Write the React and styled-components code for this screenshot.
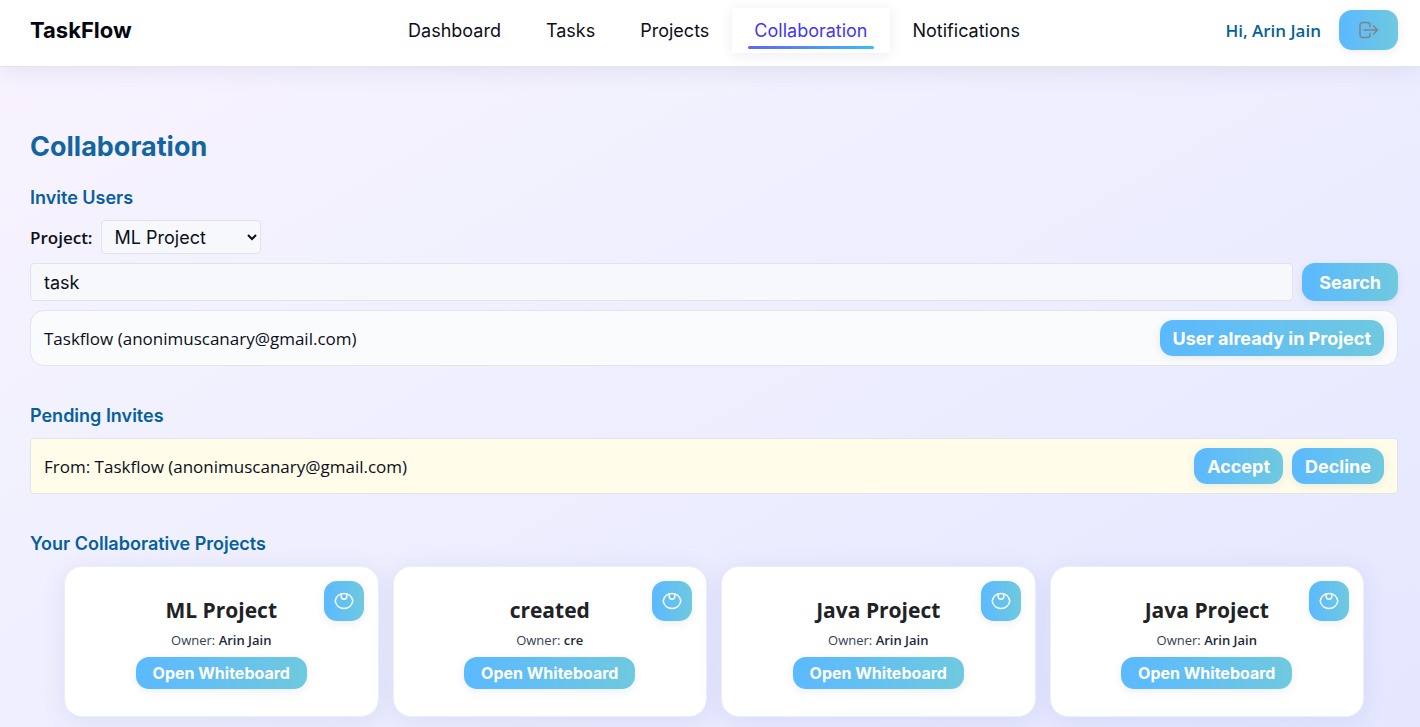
import React, { useState } from "react";
import styled, { createGlobalStyle, css } from "styled-components";

const inter = `Inter, "Liberation Sans", sans-serif`;
const body = `"Open Sans", "Noto Sans", sans-serif`;

const GlobalStyle = createGlobalStyle`
  *, *::before, *::after { box-sizing: border-box; }
  html { min-height: 100%; background: #e4e8ff; overflow-x: hidden; }
  body {
    margin: 0;
    background: linear-gradient(150deg, #f9f3ff 0%, #f2f1fe 30%, #e4e7ff 100%);
    font-family: ${body};
    font-size: 17px;
    color: #0b0f19;
  }
  h1, h2, h3, p, ul { margin: 0; padding: 0; }
  ul { list-style: none; }
`;

const Header = styled.header`
  display: grid;
  grid-template-columns: 1fr auto 1fr;
  align-items: start;
  height: 67px;
  padding: 8px 22px 0 30px;
  background: #fff;
  border-bottom: 1px solid #e2e4ee;
  box-shadow: 0 4px 24px rgba(60, 60, 120, 0.09);
`;

const Brand = styled.a`
  font: 700 22px/44px ${inter};
  color: #05060f;
  text-decoration: none;
`;

const Nav = styled.nav`
  display: flex;
  gap: 1px;
`;

const NavLink = styled.a`
  position: relative;
  padding: 0 22px;
  font: 400 18px/45px ${inter};
  color: #0b0f19;
  text-decoration: none;
  ${({ $active }) =>
    $active &&
    css`
      color: #4338f0;
      box-shadow: 0 2px 12px rgba(60, 60, 120, 0.09);
      &::after {
        content: "";
        position: absolute;
        left: 16px;
        right: 16px;
        bottom: 4px;
        height: 3px;
        border-radius: 2px;
        background: linear-gradient(90deg, #6366f1, #38bdf8);
      }
    `}
`;

const Account = styled.div`
  display: flex;
  justify-content: flex-end;
  align-items: center;
  gap: 18px;
  height: 44px;
`;

const Greeting = styled.span`
  font-size: 17px;
  font-weight: 600;
  color: #075f9c;
`;

const Button = styled.button`
  display: inline-flex;
  align-items: center;
  justify-content: center;
  height: 36px;
  padding: 2px 13px 0;
  border: 0;
  border-radius: 13px;
  background: linear-gradient(90deg, #5bb9ff, #6fc9df);
  box-shadow: 0 2px 8px rgba(60, 80, 140, 0.1);
  font: 700 18px/24px ${inter};
  color: #fff;
  white-space: nowrap;
  cursor: pointer;
`;

const LogoutButton = styled(Button)`
  width: 59px;
  height: 40px;
  padding: 0;
  color: #80818f;
`;

const SearchButton = styled(Button)`
  height: 38px;
  padding: 2px 17px 0;
`;

const WhiteboardButton = styled(Button)`
  height: 32px;
  padding: 0 17px;
  font-size: 16px;
`;

const ViewButton = styled(Button)`
  position: absolute;
  top: 14px;
  right: 14px;
  width: 40px;
  height: 40px;
  padding: 0;
`;

const Main = styled.main`
  padding: 62px 22px 10px 30px;
`;

const Title = styled.h1`
  font: 700 27px/36px ${inter};
  color: #12659f;
`;

const Section = styled.section`
  display: flex;
  flex-direction: column;
  gap: 9px;
  margin-top: ${({ $first }) => ($first ? 20 : 37)}px;
`;

const Heading = styled.h2`
  font: 600 18px/26px ${inter};
  color: #075f9c;
`;

const ProjectPicker = styled.div`
  display: flex;
  align-items: center;
  gap: 8px;
`;

const Label = styled.label`
  font-size: 17px;
  font-weight: 600;
`;

const field = css`
  border: 1px solid #dfe3ec;
  border-radius: 4px;
  background: #f6f8fc;
  font: 400 18px/24px ${inter};
  color: #0b0f19;
`;

const Select = styled.select`
  ${field}
  width: 160px;
  height: 34px;
  padding: 0 0 0 9px;
`;

const SearchForm = styled.form`
  display: flex;
  gap: 9px;
`;

const SearchInput = styled.input`
  ${field}
  flex: 1;
  min-width: 0;
  height: 38px;
  padding: 0 13px;
`;

const Row = styled.li`
  display: flex;
  align-items: center;
  justify-content: space-between;
  gap: 9px;
  padding: 9px 13px;
  border: 1px solid #e3e4ea;
  border-radius: ${({ $pending }) => ($pending ? 4 : 14)}px;
  background: ${({ $pending }) => ($pending ? "#fffce9" : "#fafbfd")};
`;

const Actions = styled.div`
  display: flex;
  gap: 9px;
`;

const Cards = styled.ul`
  display: grid;
  grid-template-columns: repeat(4, 1fr);
  gap: 14px;
  padding: 0 34px;
`;

const Card = styled.li`
  position: relative;
  display: flex;
  flex-direction: column;
  align-items: center;
  padding: 28px 13px 27px;
  border: 1px solid #eceefa;
  border-radius: 18px;
  background: #fff;
  box-shadow: 0 4px 24px rgba(80, 90, 180, 0.11);
`;

const CardTitle = styled.h3`
  font-size: 21px;
  line-height: 30px;
  font-weight: 700;
  color: #212226;
`;

const Owner = styled.p`
  margin: 5px 0 7px;
  font-size: 13px;
  line-height: 20px;
  color: #334155;
  b {
    font-weight: 600;
    color: #1e293b;
  }
`;

const LogoutIcon = () => (
  <svg width="20" height="18" viewBox="0 0 20 18" fill="none" stroke="currentColor" strokeWidth="1.5" strokeLinecap="round" strokeLinejoin="round" aria-hidden="true">
    <path d="M11 5.500V4a2.500 2.500 0 0 0-2.500-2.500H3.500A2.500 2.500 0 0 0 1 4v10a2.500 2.500 0 0 0 2.500 2.500h5A2.500 2.500 0 0 0 11 14v-1.500M5 9h13.500M14.500 5l4 4-4 4" />
  </svg>
);

const EyeIcon = () => (
  <svg width="20" height="18" viewBox="0 0 20 18" fill="none" stroke="currentColor" strokeWidth="1.400" strokeLinejoin="round" aria-hidden="true">
    <path d="M1.200 9C2 4.600 5.400 1.500 10 1.500S18 4.600 18.800 9C18 13.400 14.600 16.500 10 16.500S2 13.400 1.200 9z" />
    <path d="M7.200 2.200v2.300a2.800 2.800 0 0 0 5.600 0V2.200" />
  </svg>
);

const links = ["Dashboard", "Tasks", "Projects", "Collaboration", "Notifications"];

const projects = [
  { id: 1, name: "ML Project", owner: "Arin Jain" },
  { id: 2, name: "created", owner: "cre" },
  { id: 3, name: "Java Project", owner: "Arin Jain" },
  { id: 4, name: "Java Project", owner: "Arin Jain" },
];

export default function App() {
  const [query, setQuery] = useState("task");
  return (
    <>
      <GlobalStyle />
      <Header>
        <Brand href="#home">TaskFlow</Brand>
        <Nav>
          {links.map((name) => (
            <NavLink
              key={name}
              href={`#${name.toLowerCase()}`}
              $active={name === "Collaboration"}
              aria-current={name === "Collaboration" ? "page" : undefined}
            >
              {name}
            </NavLink>
          ))}
        </Nav>
        <Account>
          <Greeting>Hi, Arin Jain</Greeting>
          <LogoutButton type="button" aria-label="Log out">
            <LogoutIcon />
          </LogoutButton>
        </Account>
      </Header>
      <Main>
        <Title>Collaboration</Title>
        <Section $first>
          <Heading>Invite Users</Heading>
          <ProjectPicker>
            <Label htmlFor="project">Project:</Label>
            <Select id="project" defaultValue="ML Project">
              <option>ML Project</option>
              <option>Java Project</option>
            </Select>
          </ProjectPicker>
          <SearchForm onSubmit={(e) => e.preventDefault()}>
            <SearchInput
              type="text"
              aria-label="Search users"
              value={query}
              onChange={(e) => setQuery(e.target.value)}
            />
            <SearchButton type="submit">Search</SearchButton>
          </SearchForm>
          <ul>
            <Row>
              <span>Taskflow (anonimuscanary@gmail.com)</span>
              <Button type="button">User already in Project</Button>
            </Row>
          </ul>
        </Section>
        <Section>
          <Heading>Pending Invites</Heading>
          <ul>
            <Row $pending>
              <span>From: Taskflow (anonimuscanary@gmail.com)</span>
              <Actions>
                <Button type="button">Accept</Button>
                <Button type="button">Decline</Button>
              </Actions>
            </Row>
          </ul>
        </Section>
        <Section>
          <Heading>Your Collaborative Projects</Heading>
          <Cards>
            {projects.map((p) => (
              <Card key={p.id}>
                <ViewButton type="button" aria-label={`View ${p.name}`}>
                  <EyeIcon />
                </ViewButton>
                <CardTitle>{p.name}</CardTitle>
                <Owner>
                  Owner: <b>{p.owner}</b>
                </Owner>
                <WhiteboardButton type="button">Open Whiteboard</WhiteboardButton>
              </Card>
            ))}
          </Cards>
        </Section>
      </Main>
    </>
  );
}
